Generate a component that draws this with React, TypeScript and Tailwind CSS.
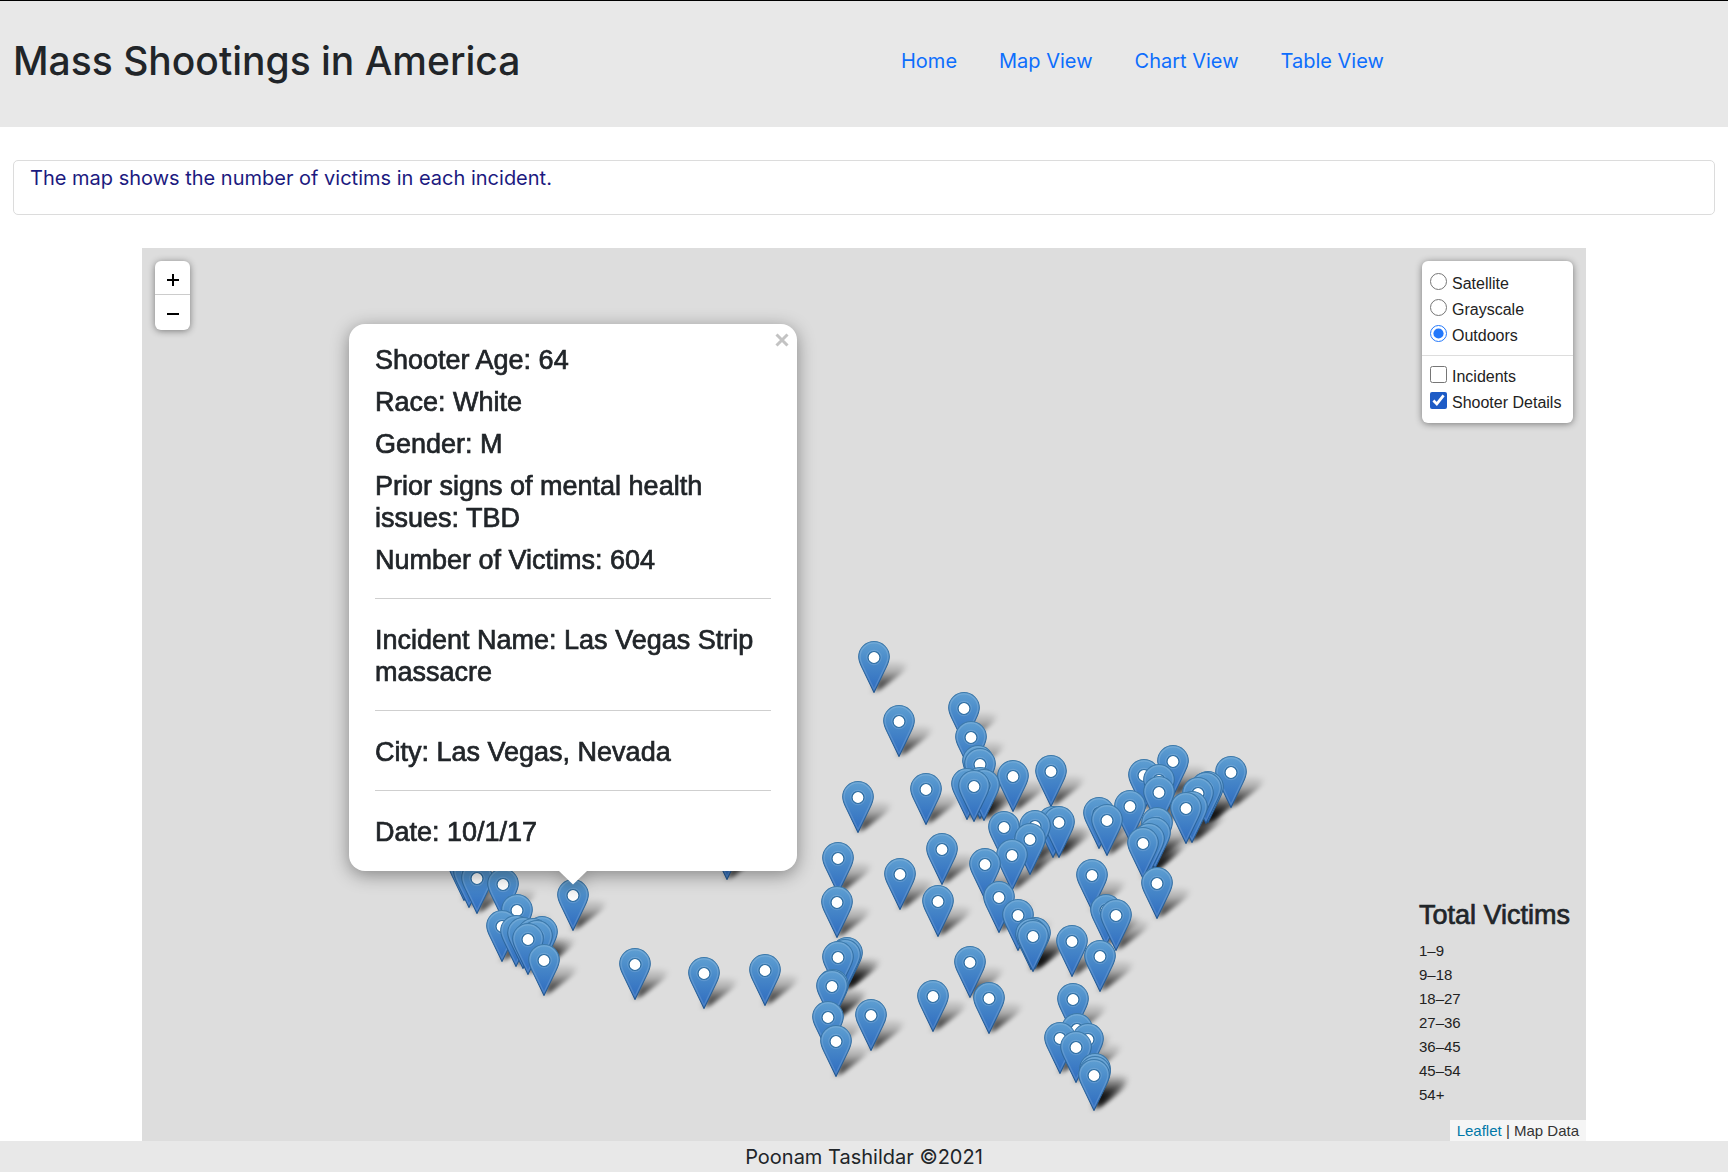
import React, { useState } from "react";

/* Marker tips: x is measured from the map's centre line, y from the map's top edge. */
const MARKERS: [number, number][] = [
  [10, 445], [35, 509], [100, 496], [107, 525], [114, 549], [116, 552], [62, 577], [-6, 585],
  [103, 572], [120, 573], [116, 571], [110, 574], [149, 564], [187, 559], [140, 615], [171, 614],
  [189, 610], [195, 610], [166, 627], [148, 643], [121, 652], [135, 685], [154, 703], [235, 601],
  [243, 608], [266, 594], [280, 563], [309, 549], [295, 568], [295, 580], [293, 611], [291, 621],
  [285, 627], [279, 631], [367, 560], [344, 575], [342, 576], [334, 581], [328, 595], [322, 596],
  [228, 663], [293, 671], [242, 698], [252, 703], [169, 724], [171, 721], [167, 722], [208, 729],
  [236, 744], [209, 787], [213, 817], [196, 826], [224, 827], [212, 835], [231, 857], [231, 860],
  [230, 863], [106, 750], [125, 786], [-26, 646], [-27, 690], [36, 662], [78, 637], [74, 689],
  [-17, 741], [-19, 743], [-26, 745], [-31, 773], [-32, 774], [-36, 805], [-28, 829], [7, 803],
  [69, 784], [-400, 653], [-395, 660], [-387, 666], [-361, 672], [-347, 698], [-362, 714],
  [-348, 719], [-341, 721], [-322, 720], [-331, 722], [-327, 724], [-336, 727], [-320, 748],
  [-291, 683], [-229, 752], [-160, 761], [-99, 758], [-137, 632],
];

const PIN =
  "M12.5.4C19.2.4 24.6 5.8 24.6 12.5c0 2.9-1.4 6.100-2.700 8.700L12.500 40.600 3.100 21.200C1.800 18.600.4 15.400.4 12.500.4 5.800 5.800.4 12.500.4z";

const Defs = () => (
  <svg className="absolute size-0" aria-hidden="true">
    <defs>
      <linearGradient id="pinFill" x1="0" y1="0" x2="0" y2="1">
        <stop offset="0" stopColor="#5f9fd2" />
        <stop offset="0.35" stopColor="#4b8cca" />
        <stop offset="0.85" stopColor="#3573c2" />
        <stop offset="1" stopColor="#2f6cba" />
      </linearGradient>
      <linearGradient id="pinEdge" x1="0" y1="0" x2="0" y2="1">
        <stop offset="0" stopColor="#3c79aa" />
        <stop offset="1" stopColor="#1f5590" />
      </linearGradient>
      <linearGradient id="shadeFill" x1="0" y1="0" x2="0" y2="1">
        <stop offset="0" stopColor="#000" stopOpacity="0.02" />
        <stop offset="0.35" stopColor="#000" stopOpacity="0.22" />
        <stop offset="0.7" stopColor="#000" stopOpacity="0.62" />
        <stop offset="1" stopColor="#000" stopOpacity="0.8" />
      </linearGradient>
      <filter id="shadeBlur" x="-40%" y="-40%" width="180%" height="180%">
        <feGaussianBlur stdDeviation="2.6" />
      </filter>
    </defs>
  </svg>
);

const Shadow = ({ x, y }: { x: number; y: number }) => (
  <svg
    className="pointer-events-none absolute h-14 w-16 -translate-x-4 -translate-y-12 overflow-visible"
    style={{ left: x, top: y }}
    viewBox="-16 -48 64 56"
    aria-hidden="true"
  >
    <g transform="matrix(1.15 0 -0.48 0.8 2 0) translate(-12.500 -41)">
      <path d={PIN} fill="url(#shadeFill)" filter="url(#shadeBlur)" />
    </g>
  </svg>
);

const Pin = ({ x, y }: { x: number; y: number }) => (
  <button
    type="button"
    aria-label="Incident"
    className="absolute h-[52px] w-8 -translate-x-1/2 -translate-y-full cursor-pointer"
    style={{ left: x, top: y }}
  >
    <svg viewBox="0 0 25 41" className="block size-full">
      <path d={PIN} fill="url(#pinFill)" stroke="url(#pinEdge)" strokeWidth="0.8" />
      <path
        d="M12.500 1.500c6.100 0 11 4.900 11 11 0 2.600-1.300 5.600-2.600 8.200L12.500 38.200 4.100 20.700C2.800 18.100 1.500 15.100 1.500 12.500c0-6.100 4.900-11 11-11z"
        fill="none"
        stroke="#fff"
        strokeOpacity="0.13"
        strokeWidth="1.1"
      />
      <circle cx="12.500" cy="13" r="5.600" fill="none" stroke="#fff" strokeOpacity="0.12" strokeWidth="1" />
      <circle cx="12.500" cy="13" r="4.700" fill="#fff" stroke="#2a6a9f" strokeWidth="0.9" />
    </svg>
  </button>
);

const NAV = ["Home", "Map View", "Chart View", "Table View"];
const BASES = ["Satellite", "Grayscale", "Outdoors"];
const OVERLAYS = ["Incidents", "Shooter Details"];
const GRADES = ["1–9", "9–18", "18–27", "27–36", "36–45", "45–54", "54+"];
const DETAILS = [
  "Shooter Age: 64",
  "Race: White",
  "Gender: M",
  "Prior signs of mental health issues: TBD",
  "Number of Victims: 604",
];
const FACTS = ["Incident Name: Las Vegas Strip massacre", "City: Las Vegas, Nevada", "Date: 10/1/17"];

const panel = "rounded-[6px] bg-white shadow-[0_1px_7px_rgba(0,0,0,0.45)]";

export default function App() {
  const [base, setBase] = useState("Outdoors");
  const [overlays, setOverlays] = useState<string[]>(["Shooter Details"]);
  const toggle = (name: string) =>
    setOverlays((list) => (list.includes(name) ? list.filter((n) => n !== name) : [...list, name]));
  const pins = [...MARKERS].sort((a, b) => a[1] - b[1]);

  return (
    <div className="bg-white font-['Inter',sans-serif] text-[#212529]">
      <Defs />
      <header className="grid h-[127px] grid-cols-[1fr_1fr] border-t border-black bg-[#e8e8e8] pt-[34px]">
        <h1 className="pl-[13px] text-[39px] leading-[52px] font-medium">Mass Shootings in America</h1>
        <nav className="flex items-start gap-[42px] pl-[37px] text-[20px] leading-[52px] text-[#0d6efd]">
          {NAV.map((item) => (
            <a key={item} href="#" className="whitespace-nowrap">
              {item}
            </a>
          ))}
        </nav>
      </header>

      <section className="mx-[13px] mt-[33px] h-[55px] rounded-[5px] border border-[#dcdcdc] px-4 text-[20px] leading-[34px] text-[#1c1a80]">
        <p>The map shows the number of victims in each incident.</p>
      </section>

      <main className="relative mx-[142px] mt-[33px] h-[893px] overflow-hidden bg-[#ddd] font-['Liberation_Sans',sans-serif]">
        <div className="absolute top-0 left-1/2">
          {pins.map(([x, y], i) => (
            <Shadow key={i} x={x} y={y} />
          ))}
          {pins.map(([x, y], i) => (
            <Pin key={i} x={x} y={y} />
          ))}

          <div className="absolute bottom-[-637px] left-[-291px] w-[448px] -translate-x-1/2 drop-shadow-[0_4px_9px_rgba(0,0,0,0.4)]">
            <article className="relative rounded-[16px] bg-white px-[26px] pt-5 pb-[23px] text-[27px] leading-8 text-[#212529] [-webkit-text-stroke:0.7px_#212529]">
              <div className="flex flex-col gap-2.5">
                {DETAILS.map((line) => (
                  <p key={line}>{line}</p>
                ))}
              </div>
              {FACTS.map((line) => (
                <div key={line}>
                  <hr className="mt-[22px] mb-[25px] border-[#cfcfcf]" />
                  <p>{line}</p>
                </div>
              ))}
              <button type="button" aria-label="Close" className="absolute top-2 right-[7px] grid size-4 place-items-center text-[#c3c3c3]">
                <svg viewBox="0 0 14 14" className="size-3.5">
                  <path d="M1.500 1.500l11 11M12.500 1.500l-11 11" stroke="currentColor" strokeWidth="3" />
                </svg>
              </button>
            </article>
            <svg viewBox="0 0 28 14" className="mx-auto block h-3.5 w-7">
              <path d="M0 0h28L14 13.500z" fill="#fff" />
            </svg>
          </div>
        </div>

        <div className={`absolute top-[13px] left-[13px] flex w-[35px] flex-col overflow-hidden text-black ${panel}`}>
          <button type="button" aria-label="Zoom in" className="grid h-[34px] place-items-center border-b border-[#ccc] pt-1">
            <svg viewBox="0 0 14 14" className="size-3.5">
              <path d="M7 1v12M1 7h12" stroke="currentColor" strokeWidth="2" />
            </svg>
          </button>
          <button type="button" aria-label="Zoom out" className="grid h-[35px] place-items-center pt-0.5">
            <svg viewBox="0 0 14 14" className="size-3.5">
              <path d="M1 7h12" stroke="currentColor" strokeWidth="2" />
            </svg>
          </button>
        </div>

        <form className={`absolute top-[13px] right-[13px] w-[151px] pt-[9px] pb-2 text-[16px] text-[#222] ${panel}`}>
          <div className="px-2">
            {BASES.map((name) => (
              <label key={name} className="flex h-[26px] items-start gap-[5px] leading-7">
                <input
                  type="radio"
                  name="base"
                  checked={base === name}
                  onChange={() => setBase(name)}
                  className="mt-[3px] size-[17px] shrink-0 accent-[#2378fb]"
                />
                {name}
              </label>
            ))}
          </div>
          <hr className="my-[7px] border-[#ddd]" />
          <div className="px-2">
            {OVERLAYS.map((name) => (
              <label key={name} className="flex h-[26px] items-start gap-[5px] leading-7 whitespace-nowrap">
                <input
                  type="checkbox"
                  checked={overlays.includes(name)}
                  onChange={() => toggle(name)}
                  className="mt-[3px] size-[17px] shrink-0 accent-[#1d5bc6]"
                />
                {name}
              </label>
            ))}
          </div>
        </form>

        <aside className="absolute right-[13px] bottom-[34px] w-[154px] text-[15px] text-[#222]">
          <h2 className="mb-2 text-[27px] leading-8 whitespace-nowrap text-[#212529] [-webkit-text-stroke:0.7px_#212529]">Total Victims</h2>
          <ul>
            {GRADES.map((g) => (
              <li key={g} className="h-6 leading-6">
                {g}
              </li>
            ))}
          </ul>
        </aside>

        <div className="absolute right-0 bottom-0 bg-white/70 px-[7px] text-[15px] leading-[21px] text-[#333]">
          <a href="#" className="text-[#0078a8]">
            Leaflet
          </a>{" "}
          | Map Data
        </div>
      </main>

      <footer className="h-[31px] bg-[#e8e8e8] text-center text-[20px] leading-[33px]">Poonam Tashildar ©2021</footer>
    </div>
  );
}
